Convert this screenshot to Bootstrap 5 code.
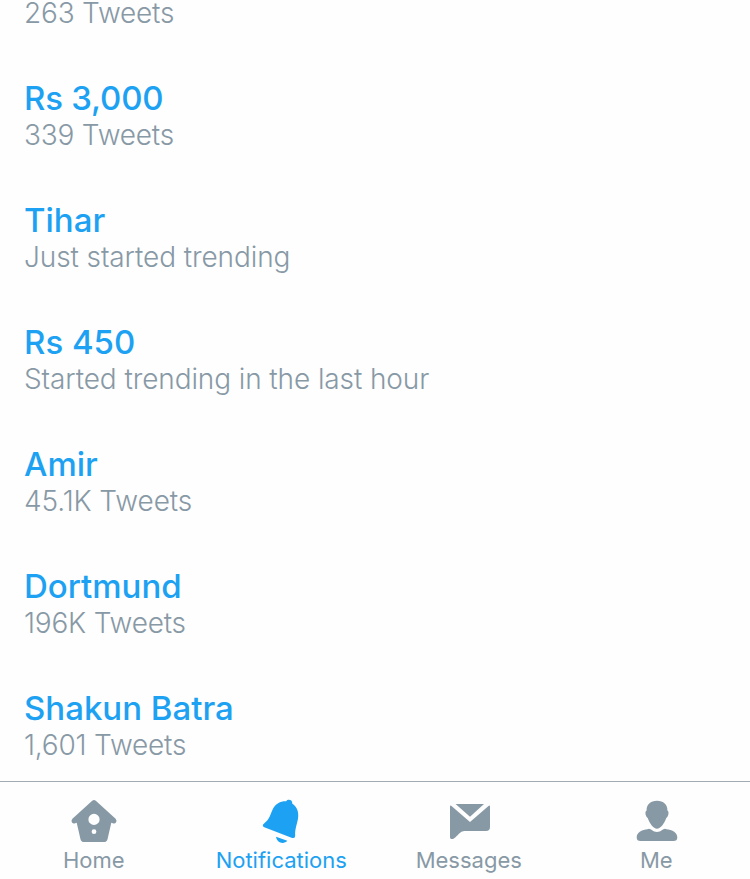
<!DOCTYPE html>
<html lang="en">
<head>
<meta charset="utf-8">
<meta name="viewport" content="width=device-width, initial-scale=1">
<title>Trends</title>
<link rel="stylesheet" href="https://cdn.jsdelivr.net/npm/bootstrap@5.3.0/dist/css/bootstrap.min.css">
<style>
body { font-family: Inter, "Liberation Sans", sans-serif; background: #fefefe; }
.trends { min-height: 0; }
.trend { padding: 30px 24px 19px; flex-shrink: 0; }
.trend-title { font-size: 33px; line-height: 39px; font-weight: 500; color: #1da1f2; }
.trend-amount { letter-spacing: -.2px; }
.trend-note { font-size: 28px; line-height: 34px; font-weight: 300; color: #8899a6; letter-spacing: -.1px; }
.trend-count { letter-spacing: -.2px; }
.tabs { height: 98px; border-top: 1px solid #a3abb2; padding-top: 11px; }
.tab { color: #8899a6; font-size: 22px; line-height: 22px; }
.tab.active { color: #1da1f2; }
.tab svg { width: 56px; height: 56px; display: block; fill: currentColor; }
</style>
</head>
<body>
<div class="vh-100 d-flex flex-column overflow-hidden">
  <main class="trends flex-grow-1 d-flex flex-column justify-content-end overflow-hidden text-nowrap">
    <div class="trend"><div class="trend-note trend-count">263 Tweets</div></div>
    <div class="trend"><div class="trend-title trend-amount">Rs 3,000</div><div class="trend-note trend-count">339 Tweets</div></div>
    <div class="trend"><div class="trend-title">Tihar</div><div class="trend-note">Just started trending</div></div>
    <div class="trend"><div class="trend-title">Rs 450</div><div class="trend-note">Started trending in the last hour</div></div>
    <div class="trend"><div class="trend-title">Amir</div><div class="trend-note">45.1K Tweets</div></div>
    <div class="trend"><div class="trend-title">Dortmund</div><div class="trend-note trend-count">196K Tweets</div></div>
    <div class="trend"><div class="trend-title">Shakun Batra</div><div class="trend-note trend-count">1,601 Tweets</div></div>
  </main>
  <nav class="tabs row g-0 flex-shrink-0 text-center">
    <a class="tab col d-flex flex-column align-items-center text-decoration-none" href="#">
      <svg viewBox="66 793 56 56"><path fill-rule="evenodd" d="M92.2 800.7Q94 799.200 95.800 800.700L115.600 818.800Q117.300 820.700 116 822.500Q114.800 823.900 112.800 823.200L111.300 822.700L107.500 839.200Q106.800 842 104 842H84Q81.200 842 80.500 839.200L76.700 822.700L75.200 823.200Q73.200 823.900 72 822.500Q70.700 820.700 72.400 818.800ZM94 813.800a5.600 5.600 0 1 0 0 11.200a5.600 5.600 0 1 0 0-11.200ZM94 829.300a2.400 2.400 0 1 0 0 4.800a2.400 2.400 0 1 0 0-4.800Z"/></svg>
      <span>Home</span></a>
    <a class="tab active col d-flex flex-column align-items-center text-decoration-none" href="#">
      <svg viewBox="253 793 56 56"><path d="M286.300 801.200C287.200 799.400 290 799.200 291.500 800.800Q292.400 801.800 292.200 803.400C296.500 806.200 298.700 811 298.200 816.500C297.800 823 294.600 828.500 295.200 835.500Q295.300 838.600 292.200 837.900L264.300 827.300Q261.400 825.500 264.100 823.400C269.700 819.500 270.300 814.400 273 808.800C275.700 803.600 280.300 801 286.300 801.200ZM276 836.800L287.300 840.800C284.500 844.200 277.200 844 276 836.800Z"/></svg>
      <span>Notifications</span></a>
    <a class="tab col d-flex flex-column align-items-center text-decoration-none" href="#">
      <svg viewBox="441 793 56 56"><path d="M455.600 804H484L470 816.800ZM450 807Q450 804.800 451.500 805.900L470 822L488.500 805.900Q490 804.800 490 807V827Q490 831 486 831H464.500C461 831 459 834 455.500 837.200C453 839.500 450 840 450 837Z"/></svg>
      <span>Messages</span></a>
    <a class="tab col d-flex flex-column align-items-center text-decoration-none" href="#">
      <svg viewBox="628 793 56 56"><path d="M657 800.800C663.500 800.800 667.600 804.600 667.400 810.500C669.300 811.300 668.700 816.300 666.300 818C664.300 823.500 660.600 828.700 657 828.700S649.700 823.500 647.700 818C645.300 816.300 644.700 811.300 646.600 810.500C646.400 804.600 650.500 800.800 657 800.800ZM648.500 828.900C651 828.400 652.500 832 657 832S663 828.400 665.500 828.900C673 829.700 677.300 832.500 677.300 837.500Q677.300 841 673.500 841H640.500Q636.700 841 636.700 837.500C636.700 832.500 641 829.700 648.500 828.900Z"/></svg>
      <span>Me</span></a>
  </nav>
</div>
<script src="https://cdn.jsdelivr.net/npm/bootstrap@5.3.0/dist/js/bootstrap.bundle.min.js"></script>
</body>
</html>
